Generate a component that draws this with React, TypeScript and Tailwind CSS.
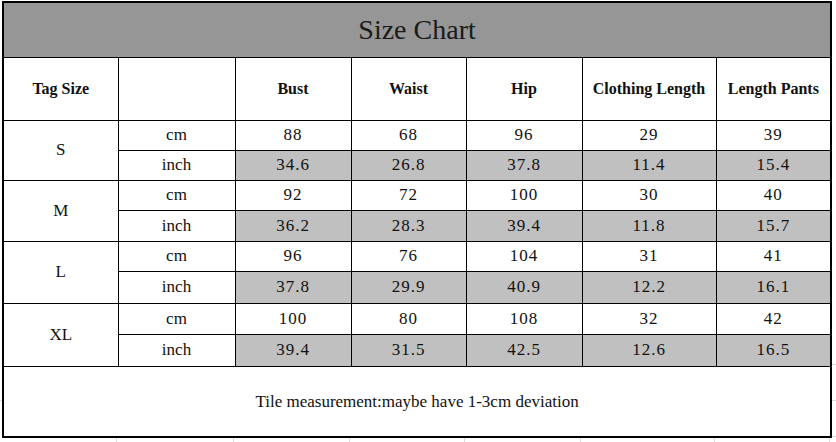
import React from 'react';

const headers = ['Bust', 'Waist', 'Hip', 'Clothing Length', 'Length Pants'];

const sizes = [
  { tag: 'S', cm: ['88', '68', '96', '29', '39'], inch: ['34.6', '26.8', '37.8', '11.4', '15.4'], cmH: 'h-[30px]', inH: 'h-[30px]' },
  { tag: 'M', cm: ['92', '72', '100', '30', '40'], inch: ['36.2', '28.3', '39.4', '11.8', '15.7'], cmH: 'h-[30px]', inH: 'h-[31px]' },
  { tag: 'L', cm: ['96', '76', '104', '31', '41'], inch: ['37.8', '29.9', '40.9', '12.2', '16.1'], cmH: 'h-[30px]', inH: 'h-[32px]' },
  { tag: 'XL', cm: ['100', '80', '108', '32', '42'], inch: ['39.4', '31.5', '42.5', '12.6', '16.5'], cmH: 'h-[31px]', inH: 'h-[32px]' },
];

const cell = "border border-black text-center align-middle p-0 font-['Liberation_Serif','Times_New_Roman',serif]";

export default function App() {
  return (
    <div className="w-[836px] h-[442px] bg-white overflow-hidden text-[#111] font-['Liberation_Serif','Times_New_Roman',serif]">
      <div className="flex pt-px">
        {/* left gutter, faint sheet gridline */}
        <div className="w-[2px] shrink-0">
          <div className="h-[400px] border-b border-[#dcdcdc]" />
        </div>

        <table className="w-[829px] table-fixed border-collapse border-2 border-black">
          <colgroup>
            <col className="w-[115px]" />
            <col className="w-[117px]" />
            <col className="w-[116px]" />
            <col className="w-[115px]" />
            <col className="w-[116px]" />
            <col className="w-[134px]" />
            <col className="w-[115px]" />
          </colgroup>
          <tbody>
            <tr className="h-[55px]">
              <td colSpan={7} className={`${cell} bg-[#969696] text-[28px] text-[#1a1a1a]`}>
                Size Chart
              </td>
            </tr>
            <tr className="h-[63px]">
              <td className={`${cell} font-bold text-[16px]`}>Tag Size</td>
              <td className={cell}></td>
              {headers.map((h) => (
                <td key={h} className={`${cell} font-bold text-[16px]`}>{h}</td>
              ))}
            </tr>
            {sizes.map((s) => (
              <React.Fragment key={s.tag}>
                <tr className={s.cmH}>
                  <td rowSpan={2} className={`${cell} text-[17px]`}>{s.tag}</td>
                  <td className={`${cell} text-[17px]`}>cm</td>
                  {s.cm.map((v, i) => (
                    <td key={i} className={`${cell} text-[17px] tracking-[1px]`}>{v}</td>
                  ))}
                </tr>
                <tr className={s.inH}>
                  <td className={`${cell} text-[17px]`}>inch</td>
                  {s.inch.map((v, i) => (
                    <td key={i} className={`${cell} text-[17px] bg-[#c0c0c0] tracking-[1px]`}>{v}</td>
                  ))}
                </tr>
              </React.Fragment>
            ))}
            <tr className="h-[71px]">
              <td colSpan={7} className={`${cell} text-[17px]`}>
                Tile measurement:maybe have 1-3cm deviation
              </td>
            </tr>
          </tbody>
        </table>

        {/* right gutter, faint sheet gridlines */}
        <div className="flex-1 flex flex-col">
          <div className="h-[364px] border-b border-[#dcdcdc]" />
          <div className="h-[36px] border-b border-[#dcdcdc]" />
          <div className="h-[36px] border-b border-[#dcdcdc]" />
        </div>
      </div>

      {/* bottom strip, faint sheet gridlines */}
      <div className="flex h-[6px] pl-[2px]">
        <div className="w-[115px] shrink-0 border-r border-[#dcdcdc]" />
        <div className="w-[117px] shrink-0 border-r border-[#dcdcdc]" />
        <div className="w-[116px] shrink-0 border-r border-[#dcdcdc]" />
        <div className="w-[115px] shrink-0 border-r border-[#dcdcdc]" />
        <div className="w-[116px] shrink-0 border-r border-[#dcdcdc]" />
        <div className="w-[134px] shrink-0 border-r border-[#dcdcdc]" />
        <div className="w-[115px] shrink-0 border-r border-[#dcdcdc]" />
      </div>
    </div>
  );
}
